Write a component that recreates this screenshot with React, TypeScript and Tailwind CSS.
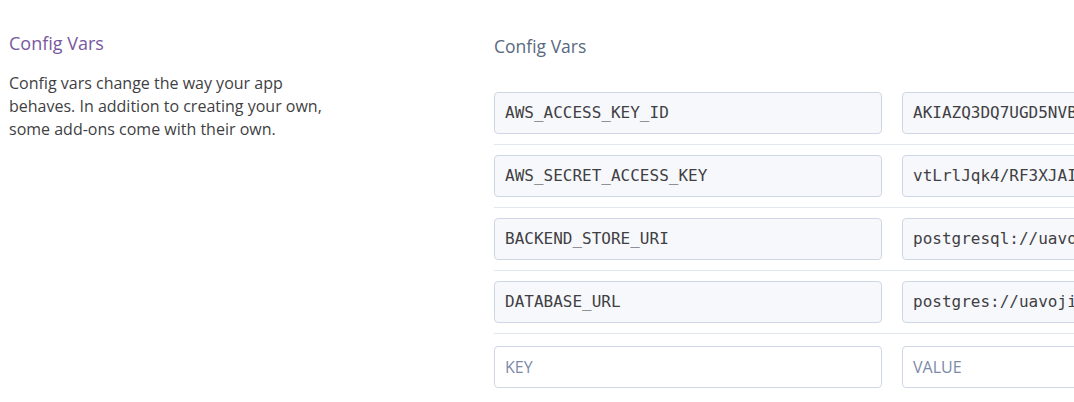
import React from "react";

const rows = [
  { k: "AWS_ACCESS_KEY_ID", v: "AKIAZQ3DQ7UGD5NVBXQ4" },
  { k: "AWS_SECRET_ACCESS_KEY", v: "vtLrlJqk4/RF3XJAIqwe82Kd" },
  { k: "BACKEND_STORE_URI", v: "postgresql://uavojimqkd" },
  { k: "DATABASE_URL", v: "postgres://uavojimqkdxp" },
];

const mono = { fontFamily: '"DejaVu Sans Mono", monospace' };

export default function App() {
  return (
    <div className="w-[1074px] h-[402px] overflow-hidden bg-white flex" style={{ fontFamily: '"Open Sans", "Noto Sans", sans-serif' }}>
      <div className="w-[485px] shrink-0 pl-[9px] pt-[30px]">
        <h2 className="text-[18px] leading-[27px] text-[#79589f]">Config Vars</h2>
        <p className="mt-[15px] w-[335px] text-[16px] leading-[23px] text-[#3f3f44]">
          Config vars change the way your app behaves. In addition to creating your own, some add-ons come with their own.
        </p>
      </div>
      <div className="flex-1 min-w-0 pl-[9px] pt-[34px]">
        <h3 className="text-[17.5px] leading-[25px] text-[#596981]">Config Vars</h3>
        <div className="mt-[33px] w-[900px]">
          {rows.map((r, i) => (
            <div key={i} className="flex gap-[20px] pb-[10px] pt-[10px] first:pt-0 border-b border-[#e3e7ef]">
              <div className="w-[388px] h-[42px] shrink-0 rounded-[4px] border border-[#cfd7e6] bg-[#f7f8fb] px-[10px] flex items-center text-[16px] text-[#3f3f44] whitespace-nowrap overflow-hidden" style={mono}>
                {r.k}
              </div>
              <div className="w-[388px] h-[42px] shrink-0 rounded-[4px] border border-[#cfd7e6] bg-[#f7f8fb] px-[10px] flex items-center text-[16px] text-[#3f3f44] whitespace-nowrap overflow-hidden" style={mono}>
                {r.v}
              </div>
            </div>
          ))}
          <div className="flex gap-[20px] pt-[12px]">
            <div className="w-[388px] h-[42px] shrink-0 rounded-[4px] border border-[#cfd7e6] bg-white px-[10px] flex items-center text-[16px] text-[#7c8aa8]">
              KEY
            </div>
            <div className="w-[388px] h-[42px] shrink-0 rounded-[4px] border border-[#cfd7e6] bg-white px-[10px] flex items-center text-[16px] text-[#7c8aa8]">
              VALUE
            </div>
          </div>
        </div>
      </div>
    </div>
  );
}
